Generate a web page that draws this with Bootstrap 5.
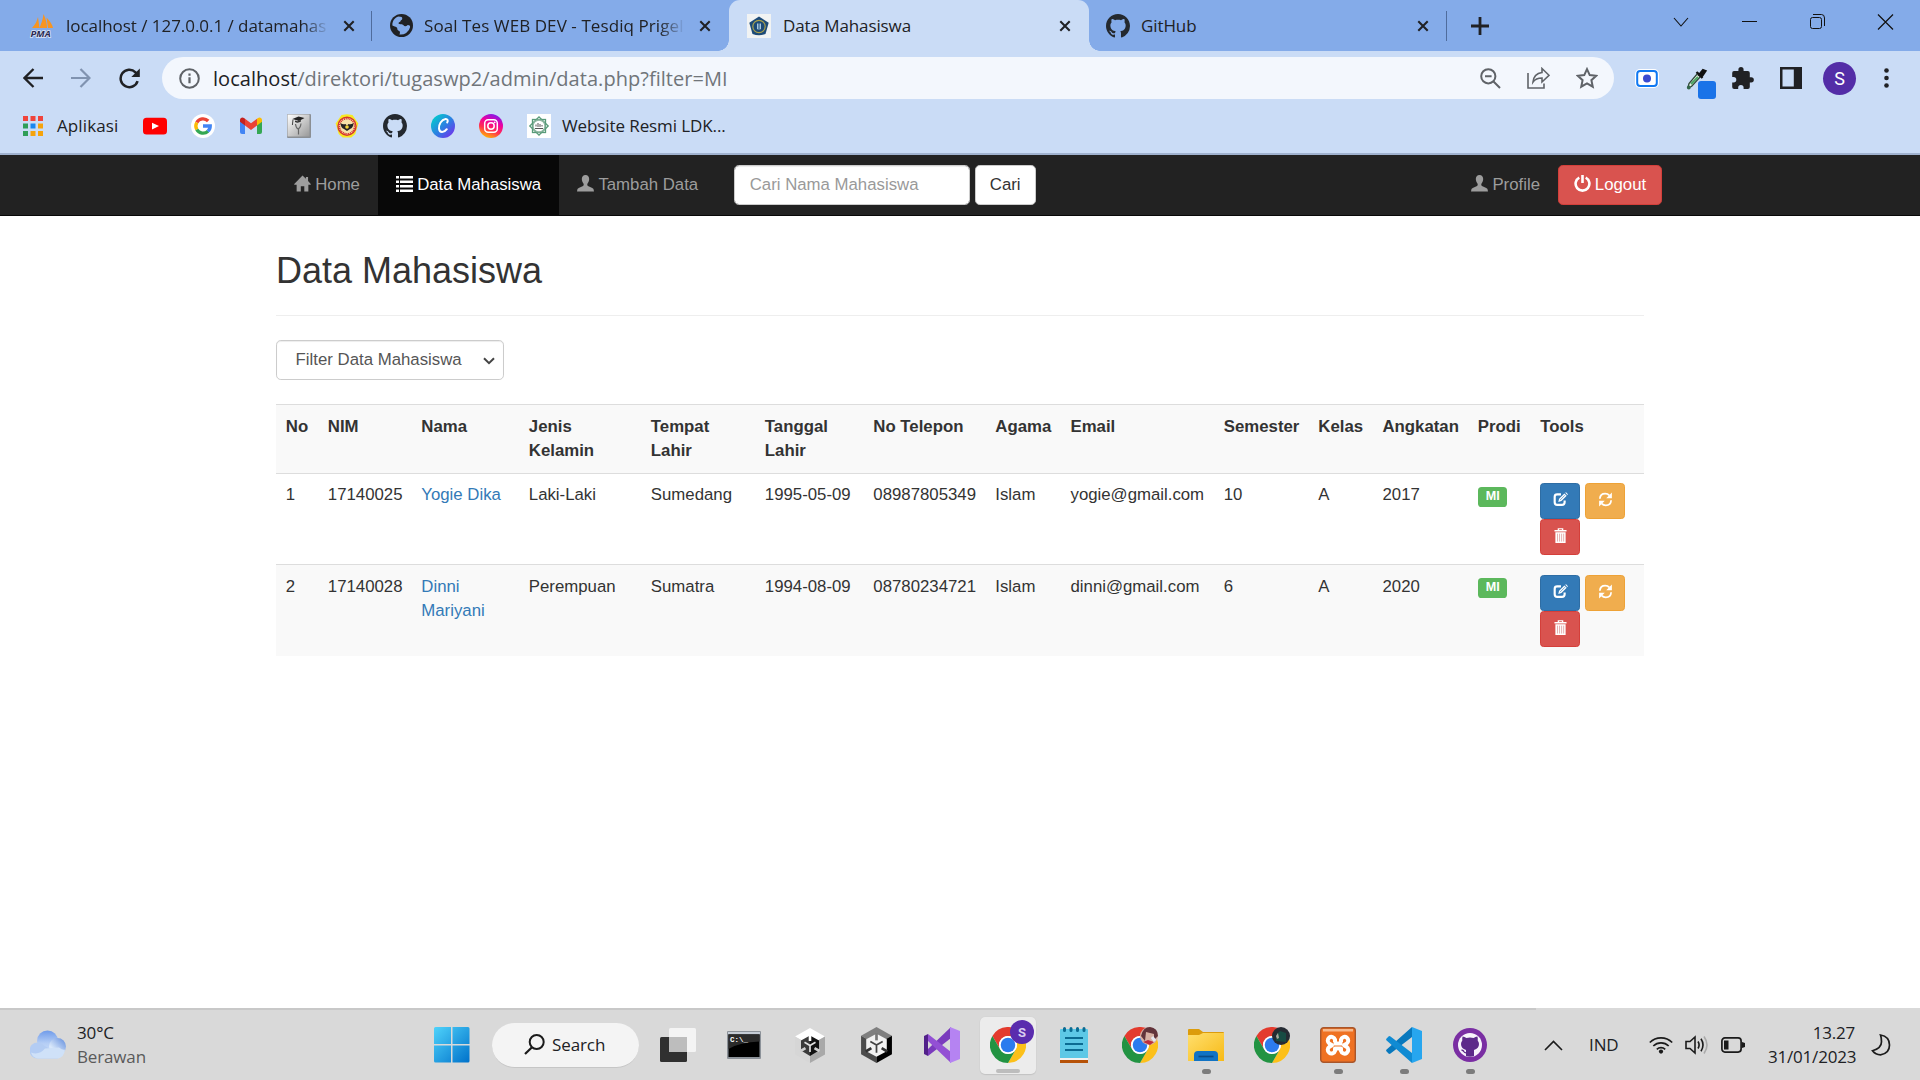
<!DOCTYPE html>
<html lang="id">
<head>
<meta charset="utf-8">
<title>Data Mahasiswa</title>
<meta name="viewport" content="width=device-width, initial-scale=1">
<link href="https://cdn.jsdelivr.net/npm/bootstrap@5.3.0/dist/css/bootstrap.min.css" rel="stylesheet">
<style>
html,body{height:100%;overflow:hidden}
body{font-family:"Liberation Sans",Arial,sans-serif;font-size:16.8px;line-height:24px;color:#333;background:#fff}
svg{display:block;flex:none}
.ui-font{font-family:"Open Sans","Noto Sans",sans-serif;color:#202124;font-size:17px;line-height:24px;letter-spacing:-.1px;white-space:nowrap}
.tabstrip{height:51px;background:#84abe9}
.tab{height:51px}
.tab-text{height:24px}
.tab-fade{-webkit-mask-image:linear-gradient(90deg,#000 90%,transparent);mask-image:linear-gradient(90deg,#000 90%,transparent)}
.tab-1{width:371px;padding-left:30px}
.tab-1 .tab-text{width:263px;margin-left:12px;letter-spacing:-.04px}
.tab-2{width:357px;padding-left:18px}
.tab-2 .tab-text{width:261px;margin-left:11px;letter-spacing:.08px}
.tab-on{width:360px;padding-left:18px;background:#cadcf6;border-radius:11px 11px 0 0;position:relative}
.tab-on .tab-text{width:262px;margin-left:12px}
.tab-on::before,.tab-on::after{content:"";position:absolute;bottom:0;width:11px;height:11px}
.tab-on::before{left:-11px;background:radial-gradient(circle at 0 0,transparent 10.5px,#cadcf6 11px)}
.tab-on::after{right:-11px;background:radial-gradient(circle at 100% 0,transparent 10.5px,#cadcf6 11px)}
.tab-4{width:357px;padding-left:17px}
.tab-4 .tab-text{width:262px;margin-left:11px}
.tab-x{margin-left:14px}
.tab-sep{width:1px;height:30px;background:#4f6c9d}
.tab-new{margin-left:24px}
.win-ctl{gap:51px;padding-right:26px;height:44px}
.toolbar{height:54px;background:#cadcf6;padding-left:23px}
.nav-arrows{gap:28px}
.omnibox{height:42px;width:1452px;background:#f3f7fd;border-radius:21px;margin-left:22px;padding:0 16px 0 17px}
.omni-actions{gap:26px}
.url{font-size:20px;line-height:28px;color:#70757a;margin-left:13px;padding-top:1px;letter-spacing:.04px}
.url span{color:#202124}
.ext-cam{margin-left:21px}
.ext-drop{margin:10px 16px 0 27px}
.ext-panel{margin:0 21px 0 26px}
.avatar{width:33px;height:33px;background:#532da7;color:#fff;font:18px/33px Roboto,sans-serif;margin-right:28px}
.bookmarks{height:50px;background:#cadcf6;border-bottom:2px solid #a0b2cf;padding-left:23px;padding-bottom:7px}
.apps-label{margin-left:14px;width:61px;letter-spacing:.1px}
.bookmarks .links{gap:24px;margin-left:25px}
.last-label{margin-left:11px}
.site-nav{height:61px;background:#222;border-bottom:1px solid #080808}
.page-box{width:1368px;margin:0 auto}
.site-nav a.menu-item{height:60px;padding:0 18px;color:#9d9d9d;text-decoration:none;white-space:nowrap}
.site-nav a.menu-item svg{margin-right:4.2px}
.site-nav a.menu-item.active{background:#080808;color:#fff}
.menu-item svg,.btn-logout svg{margin-top:-3px}
.site-nav .form-control{width:236px;height:40px;margin-left:17.5px;padding:0 15px;font-size:16.8px;border:1px solid #ccc;border-radius:4.8px;box-shadow:inset 0 1px 1px rgba(0,0,0,.075)}
.site-nav .form-control::placeholder{color:#999}
.btn-cari{width:61px;height:40px;margin-left:5px;padding:0;background:#fff;border:1px solid #ccc;color:#333;font-size:16.8px;border-radius:4.8px}
.btn-logout{width:104px;height:40px;padding:0;background:#d9534f;border:1px solid #d43f3a;color:#fff;font-size:16.8px;border-radius:4.8px;margin-right:-18px;white-space:nowrap}
.page-title{font-size:36px;line-height:40px;font-weight:500;color:#333;margin:0;padding-top:35px}
.title-rule{margin:24px 0 24px;border:0;border-top:1px solid #eee;opacity:1}
.filter{width:228px;height:40px;border:1px solid #ccc;border-radius:4.8px;padding:0 0 0 18.6px;color:#555;font-size:16.8px;line-height:24px;box-shadow:inset 0 1px 1px rgba(0,0,0,.075);background:#fff}
.filter svg{margin-right:8px;margin-top:1px}
.student-table{width:1368px;table-layout:fixed;margin:24px 0 0;color:#333;border-collapse:collapse}
.student-table tr{height:91px}
.student-table thead tr{height:69px}
.student-table>:not(caption)>*>*{padding:9.6px 9px 8px 9.8px;border:0;border-top:1px solid #ddd;vertical-align:top;box-shadow:none;background:transparent;color:#333;line-height:24px}
.student-table>tbody>tr:first-child>td{padding-top:8.6px}
.student-table tr.shade{background:#f9f9f9}
.student-table a.person{color:#337ab7;text-decoration:none}
.student-table .prodi{width:29px;height:20px;margin:3.4px 0 0 .6px;background:#5cb85c;color:#fff;font-weight:700;font-size:12.6px;line-height:18px;border-radius:3.6px;padding:0;display:block}
.student-table tr:first-child .prodi{margin-top:4.4px}
.tools{width:90px;column-gap:5px}
.tools .btn{width:40px;height:36px;padding:0 0 2px;border-radius:3.6px}
.btn-ubah{background:#337ab7;border:1px solid #2e6da4}
.btn-ulang{background:#f0ad4e;border:1px solid #eea236}
.btn-hapus{background:#d9534f;border:1px solid #d43f3a}
.taskbar{height:72px;background:#d9d9d9;color:#1b1b1b}
.taskbar-edge{height:2px;width:1536px;background:#c8c8c8}
.taskbar-body{height:70px}
.weather{width:434px;padding-left:30px}
.weather svg{margin-top:-2px}
.weather .words{margin-left:11px;line-height:24px;letter-spacing:-.15px}
.weather .sub{color:#5a5a5a}
.start{width:36px;margin-right:22px}
.search-pill{width:147px;height:45px;background:#f4f4f4;border-radius:23px;border-bottom:1px solid #c6c6c6;padding-left:32px;margin-right:6px}
.search-pill span{margin-left:7px;padding-top:1px}
.app{width:66px;height:70px;position:relative}
.app.running::after{content:"";position:absolute;left:28.5px;top:59px;width:9px;height:5px;border-radius:3px;background:#7c7c7c}
.app.front svg{position:relative}
.app.front::before{content:"";position:absolute;left:5px;top:7px;width:56px;height:57px;border-radius:5px;background:#ececec;box-shadow:0 1px 1px #c3c3c3,0 0 1px #c3c3c3}
.app.front::after{content:"";position:absolute;left:21px;top:59px;width:24px;height:4px;border-radius:3px;background:#bdbdbd}
.tray{padding-right:29px}
.tray-icons{gap:12px;margin-left:29px}
.lang{margin-left:26px;width:31px}
.clock{text-align:right;line-height:24px;margin-left:23px;margin-right:16px;width:87px;letter-spacing:-.2px;margin-top:-1px}
</style>
<script src="https://cdn.jsdelivr.net/npm/bootstrap@5.3.0/dist/js/bootstrap.bundle.min.js"></script>
</head>
<body class="d-flex flex-column">
<svg width="0" height="0" class="position-absolute" aria-hidden="true">
<defs>
<symbol id="i-x" viewBox="0 0 14 14"><path d="M1.500 1.500l11 11M12.500 1.500l-11 11" stroke="#202124" stroke-width="2.400"/></symbol>
<symbol id="i-github" viewBox="0 0 16 16"><path fill-rule="evenodd" d="M8 0C3.58 0 0 3.58 0 8c0 3.54 2.29 6.53 5.47 7.59.4.07.55-.17.55-.38 0-.19-.01-.82-.01-1.49-2.01.37-2.53-.49-2.69-.94-.09-.23-.48-.94-.82-1.13-.28-.15-.68-.52-.01-.53.63-.01 1.08.58 1.23.82.72 1.21 1.87.87 2.33.66.07-.52.28-.87.51-1.07-1.78-.2-3.64-.89-3.64-3.95 0-.87.31-1.59.82-2.15-.08-.2-.36-1.02.08-2.12 0 0 .67-.21 2.2.82.64-.18 1.32-.27 2-.27s1.36.09 2 .27c1.53-1.04 2.2-.82 2.2-.82.44 1.1.16 1.92.08 2.12.51.56.82 1.27.82 2.15 0 3.07-1.87 3.75-3.65 3.95.29.25.54.73.54 1.48 0 1.07-.01 1.93-.01 2.2 0 .21.15.46.55.38A8.01 8.01 0 0 0 16 8c0-4.42-3.58-8-8-8z"/></symbol>
<symbol id="i-user" viewBox="0 0 18 18"><path d="M9 0c2.600 0 3.900 1.800 3.900 4.300 0 2-.8 3.600-1.700 4.800-.5.700-.4 2 .4 2.500l4.600 2.200c1 .5 1.300 1.100 1.500 2.100l.3 1.600H0l.3-1.600c.2-1 .5-1.600 1.500-2.100l4.600-2.200c.8-.5.900-1.800.4-2.500C5.900 7.900 5.100 6.300 5.100 4.300 5.100 1.800 6.400 0 9 0z" fill="currentColor"/></symbol>
<symbol id="i-chrome" viewBox="0 0 48 48"><path d="M3.200 12A24 24 0 0 1 44.800 12H24A12 12 0 0 0 13.600 30z" fill="#e33b2e"/><path d="M44.800 12A24 24 0 0 1 24 48L34.400 30A12 12 0 0 0 24 12z" fill="#fcc01a"/><path d="M24 48A24 24 0 0 1 3.200 12L13.600 30A12 12 0 0 0 34.400 30z" fill="#229342"/><circle cx="24" cy="24" r="12" fill="#fff"/><circle cx="24" cy="24" r="9.700" fill="#2c7bee"/></symbol>
<symbol id="i-edit" viewBox="0 0 16 16"><path d="M8.500 2.500H4.500Q1.800 2.500 1.800 5V11Q1.800 13.800 4.500 13.800H9.500Q12.400 13.800 12.400 11V9" fill="none" stroke="#fff" stroke-width="2.300"/><path d="M5.600 10.700l.9-3.600 5.600-5.500 2.500 2.500-5.600 5.600z" fill="#fff"/><path d="M13 .9l.9-.6 2 2-.6.9z" fill="#fff"/><path d="M7.500 8.600l5.200-5.200" stroke="#337ab7" stroke-width=".7"/></symbol>
<symbol id="i-refresh" viewBox="0 0 16 16"><path d="M2 7.200C2.200 3.800 4.600 1.700 7.700 1.700c1.900 0 3.300.7 4.300 1.900M14 8.800c-.2 3.400-2.600 5.500-5.700 5.500-1.900 0-3.300-.7-4.300-1.900" fill="none" stroke="#fff" stroke-width="1.900"/><path d="M14.800.6V6.600H8.800zM1.200 15.400V9.400h6z" fill="#fff"/></symbol>
<symbol id="i-trash" viewBox="0 0 14 16"><path d="M4 2V.2h6V2h3.500v1.600H.5V2zM5.500 2h3v-.6h-3zM1.500 4.600h11V16h-11z" fill="#fff" fill-rule="evenodd"/><path d="M3.800 6v8.500M6 6v8.500M8.200 6v8.500M10.400 6v8.500" stroke="#dc9494" stroke-width=".8"/></symbol>
<linearGradient id="g-win" x1="0" y1="0" x2="1" y2="1"><stop stop-color="#4fd3fb"/><stop offset="1" stop-color="#0071ca"/></linearGradient>
<linearGradient id="g-cloud" x1="0" y1="0" x2="0" y2="1"><stop stop-color="#6f9bea"/><stop offset=".6" stop-color="#b4cdf5"/><stop offset="1" stop-color="#c7dcf8"/></linearGradient>
<linearGradient id="g-cloud2" x1="1" y1="0" x2="0" y2="1"><stop stop-color="#5f8bdc"/><stop offset=".7" stop-color="#d8e7fa"/></linearGradient>
<linearGradient id="g-canva" x1="0" y1="0" x2="1" y2="1"><stop offset=".15" stop-color="#07c2d0"/><stop offset=".55" stop-color="#2f7be3"/><stop offset="1" stop-color="#8320ee"/></linearGradient>
<linearGradient id="g-insta" x1=".3" y1="1" x2=".7" y2="0"><stop stop-color="#ffb900"/><stop offset=".35" stop-color="#ff3050"/><stop offset=".65" stop-color="#f2009c"/><stop offset="1" stop-color="#7b1df0"/></linearGradient>
<linearGradient id="g-folder" x1="0" y1="0" x2="1" y2="1"><stop stop-color="#ffdf6e"/><stop offset="1" stop-color="#f7ba16"/></linearGradient>
<linearGradient id="g-grey" x1="0" y1="0" x2="1" y2="1"><stop stop-color="#fff"/><stop offset="1" stop-color="#999"/></linearGradient>
</defs>
</svg>

<!-- tab strip -->
<header class="tabstrip d-flex align-items-center ui-font">
  <div class="tab tab-1 d-flex align-items-center">
    <svg width="24" height="24" viewBox="0 0 24 24" overflow="visible"><path d="M2 14C5 11 7 7 8 3l1.500 11zM9.500 14C11 10 13 5 13.500 0c2 4 3.500 9 3.500 14zM16.500 3.500C20 7 22.500 11 23 14h-5z" fill="#f79522"/><text x=".5" y="22.800" font-family="Open Sans,sans-serif" font-size="9.500" font-weight="700" font-style="italic" letter-spacing="0" fill="#2b2b54" stroke="#dfe6f5" stroke-width="1.500" paint-order="stroke">PMA</text></svg>
    <div class="tab-text tab-fade">localhost / 127.0.0.1 / datamahas</div>
    <svg class="tab-x" width="12" height="12"><use href="#i-x"/></svg>
  </div>
  <div class="tab-sep"></div>
  <div class="tab tab-2 d-flex align-items-center">
    <svg width="23" height="23" viewBox="0 0 22 22"><circle cx="11" cy="11" r="11" fill="#202124"/><path d="M8 2.500c3 0 4 .8 3.700 2.200-.3 1.200-1.400.9-1.600 2-.2 1.300-1.700.7-2 2 0 1 1.500 1.200 3.200 1.200 1.800.2 1.600 1.800 3.300 1.900 1.600.1 1.500-1.200 2.600-1.200 1.300 0 2.200.7 2 2A9 9 0 0 1 9 19.500c1-1.500.6-3-.5-3.500-1-.5-1.500-.8-1.500-2 0-1.500-1.300-1.500-2.500-2L2.300 11C2 7 4.500 3.500 8 2.500z" fill="#84abe9"/></svg>
    <div class="tab-text tab-fade">Soal Tes WEB DEV - Tesdiq Prigel</div>
    <svg class="tab-x" width="12" height="12"><use href="#i-x"/></svg>
  </div>
  <div class="tab tab-on d-flex align-items-center">
    <svg width="24" height="24" viewBox="0 0 24 24"><path d="M0 0h24v24H0z" fill="#f1f3f3"/><path d="M12 2.500l9.700 6.300L18.500 20q-6.500 2.500-13 0L2.300 8.800z" fill="#1c4a78"/><circle cx="12" cy="12.500" r="6.200" fill="none" stroke="#a9a04c" stroke-width="1.200"/><path d="M10 9.500h4v5.500l-2 1-2-1z" fill="#a7c7dd"/><path d="M12 9v7" stroke="#1c4a78"/></svg>
    <div class="tab-text">Data Mahasiswa</div>
    <svg class="tab-x" width="12" height="12"><use href="#i-x"/></svg>
  </div>
  <div class="tab tab-4 d-flex align-items-center">
    <svg width="24" height="24" fill="#24292f"><use href="#i-github"/></svg>
    <div class="tab-text">GitHub</div>
    <svg class="tab-x" width="12" height="12"><use href="#i-x"/></svg>
  </div>
  <div class="tab-sep"></div>
  <svg class="tab-new" width="18" height="18" viewBox="0 0 18 18"><path d="M9 0v18M0 9h18" stroke="#202124" stroke-width="2.800"/></svg>
  <div class="win-ctl d-flex align-items-center ms-auto align-self-start">
    <svg width="18" height="16" viewBox="0 0 18 16"><path d="M2 4l7 8 7-8" fill="none" stroke="#111" stroke-width="1.100"/></svg>
    <svg width="17" height="16"><path d="M1 7.500h15" stroke="#111"/></svg>
    <svg width="17" height="16" viewBox="0 0 17 16"><rect x="1.500" y="3.500" width="11" height="11" rx="2" fill="none" stroke="#111"/><path d="M4 .5h8.500Q15.500.5 15.500 4v8" fill="none" stroke="#111"/></svg>
    <svg width="17" height="16"><path d="M1 .5l15 15M16 .5L1 15.500" stroke="#111" stroke-width="1.200"/></svg>
  </div>
</header>

<!-- toolbar -->
<div class="toolbar d-flex align-items-center ui-font">
  <div class="nav-arrows d-flex align-items-center">
    <svg width="20" height="20" viewBox="0 0 20 20"><path d="M20 10H2M10.500 1L1.500 10l9 9" fill="none" stroke="#202124" stroke-width="2.300"/></svg>
    <svg width="20" height="20" viewBox="0 0 20 20"><path d="M0 10h18M9.500 1l9 9-9 9" fill="none" stroke="#8093b0" stroke-width="2.200"/></svg>
    <svg width="21" height="21" viewBox="0 0 21 21"><path d="M18.600 13.200A8.700 8.700 0 1 1 16.500 4.300L18 6" fill="none" stroke="#202124" stroke-width="2.500"/><path d="M20.800.5V9h-8.500z" fill="#202124"/></svg>
  </div>
  <div class="omnibox d-flex align-items-center">
    <svg width="21" height="21" viewBox="0 0 21 21"><circle cx="10.500" cy="10.500" r="9.300" fill="none" stroke="#5f6368" stroke-width="2"/><path d="M10.500 9.200v6M10.500 5.500v2.200" stroke="#5f6368" stroke-width="2.200"/></svg>
    <div class="url"><span>localhost</span>/direktori/tugaswp2/admin/data.php?filter=MI</div>
    <div class="omni-actions d-flex align-items-center ms-auto">
      <svg width="21" height="21" viewBox="0 0 21 21"><circle cx="8.300" cy="8.300" r="7.100" fill="none" stroke="#5f6368" stroke-width="2"/><path d="M5 8.300h6.600M13.500 13.500l6.500 6.500" stroke="#5f6368" stroke-width="2"/></svg>
      <svg width="23" height="22" viewBox="0 0 23 22"><path d="M1 6v15h16v-4.500" fill="none" stroke="#5f6368" stroke-width="1.600"/><path d="M15 1.500l7 6.800-7 6.700v-4c-4 0-7 1.200-9 4C6.500 10 9 6.300 15 5.500z" fill="none" stroke="#5f6368" stroke-width="1.600"/></svg>
      <svg width="22" height="22" viewBox="0 0 21 21"><path d="M10.500 2l2.600 5.700 6.200.7-4.600 4.200 1.300 6.200-5.500-3.200-5.500 3.200 1.300-6.200-4.600-4.200 6.200-.7z" fill="none" stroke="#5f6368" stroke-width="1.900"/></svg>
    </div>
  </div>
  <svg class="ext-cam" width="24" height="19" viewBox="0 0 24 19"><rect x="0" y="0" width="24" height="19" rx="5" fill="#fff"/><rect x="2.200" y="2" width="19.600" height="15" rx="3" fill="#fff" stroke="#0f78f2" stroke-width="2"/><circle cx="12" cy="9.500" r="4" fill="#3a4bd0"/></svg>
  <svg class="ext-drop" width="30" height="32" viewBox="0 0 30 32"><path d="M2 20.500l1-4L12 6l3 3L5.500 19.500z" fill="#e7efe4" stroke="#304838" stroke-width="1.300"/><path d="M5 17l7-7" stroke="#48a360" stroke-width="2"/><path d="M10.500 5l6 6M13 8l4-5 2.500 1-4 6z" stroke="#111" stroke-width="2.200" fill="#111"/><circle cx="2.800" cy="20.500" r="1.900" fill="#34664a"/><rect x="12" y="14" width="18" height="18" rx="3" fill="#1a73e8"/></svg>
  <svg width="22" height="22" viewBox="0 0 22 22"><path d="M19.200 10.200h-1.400V6q0-2-2-2h-4.200V2.700a2.600 2.600 0 0 0-5.200 0V4H2Q.2 4 .2 6v4h1.400a2.700 2.700 0 0 1 0 5.400H.2V20q0 2 2 2h4v-1.400a2.700 2.700 0 0 1 5.400 0V22h4.200q2 0 2-2v-4.500h1.400a2.650 2.650 0 0 0 0-5.300z" fill="#202124"/></svg>
  <svg class="ext-panel" width="22" height="22" viewBox="0 0 22 22"><path d="M0 0h22v22H0zM2.500 2.500v17h11.300v-17z" fill="#202124" fill-rule="evenodd"/></svg>
  <div class="avatar rounded-circle text-center">S</div>
  <svg width="5" height="20" viewBox="0 0 5 20"><g fill="#202124"><circle cx="2.500" cy="2.500" r="2.300"/><circle cx="2.500" cy="10" r="2.300"/><circle cx="2.500" cy="17.500" r="2.300"/></g></svg>
</div>

<!-- bookmarks bar -->
<div class="bookmarks d-flex align-items-center ui-font">
  <svg width="20" height="20" viewBox="0 0 20 20"><path d="M0 0h5v5H0zM7.500 0h5v5h-5zM15 0h5v5h-5z" fill="#f0443c"/><path d="M0 7.500h5v5H0zM0 15h5v5H0z" fill="#2f9e58"/><path d="M7.500 7.500h5v5h-5z" fill="#1a86f0"/><path d="M15 7.500h5v5h-5zM7.500 15h5v5h-5zM15 15h5v5h-5z" fill="#f5a30c"/></svg>
  <div class="apps-label">Aplikasi</div>
  <div class="links d-flex align-items-center">
    <svg width="24" height="24" viewBox="0 0 24 24"><rect y="3.700" width="24" height="16.700" rx="3.500" fill="#f00"/><path d="M9 8.700v6.800l7-3.400z" fill="#fff"/></svg>
    <svg width="24" height="24" viewBox="0 0 24 24"><circle cx="12" cy="12" r="12" fill="#fff"/><g fill="none" stroke-width="3.400"><path d="M5.800 8.500A7.200 7.200 0 0 1 17.200 7" stroke="#ea4335"/><path d="M5.800 15.500A7.200 7.200 0 0 1 5.800 8.500" stroke="#fbbc05"/><path d="M17 17.200A7.200 7.200 0 0 1 5.800 15.500" stroke="#34a853"/><path d="M12 12h7.200Q19.200 15.300 16.800 17.300" stroke="#4285f4"/></g></svg>
    <svg width="24" height="24" viewBox="0 0 24 24"><path d="M1 6v12q0 2 2 2h3V9z" fill="#4285f4"/><path d="M18 20h3q2 0 2-2V6l-5 4z" fill="#34a853"/><path d="M18 4.800v6.700l5-3.800V6c0-2-2.300-3.200-4-1.900z" fill="#fbbc04"/><path d="M6 11.500V4.800l6 4.500 6-4.500v6.700L12 16z" fill="#ea4335"/><path d="M1 7.700V6c0-2 2.300-3.200 4-1.900l1 .7v6.700z" fill="#c5221f"/></svg>
    <svg width="24" height="24" viewBox="0 0 24 24"><rect width="24" height="24" rx="1" fill="#8b8f94"/><rect x=".5" y=".5" width="22" height="22" fill="url(#g-grey)"/><path d="M5.500 5l6-2.500 6 1.500-5.500 3z" fill="#222"/><path d="M8 6.500q3 1.500 6-.5v1.500q-3 2-6 .5z" fill="#333"/><path d="M6 5.500l-.6 5.500" stroke="#444" fill="none"/><path d="M8.500 10q.5 4 2.500 5 2.500-1 3-5.500M11.500 15v5.500" fill="none" stroke="#666" stroke-width="1.200"/></svg>
    <svg width="24" height="24" viewBox="0 0 24 24"><path d="M12 .3L17.500 1l5.800 8.500-3 10.500-4 3.500H7.700l-4-3.500-3-10.500L6.500 1z" fill="#f7ea22"/><circle cx="12" cy="12.200" r="9" fill="#fff3d0" stroke="#d5382c" stroke-width="1.400"/><circle cx="12" cy="12.200" r="7.600" fill="#f6e3aa" stroke="#d5382c" stroke-width="1.600" stroke-dasharray="1.200 .7"/><path d="M5.500 9q2.500 2 5 1l1.500 1.500L13.500 10q2.500 1 5-1-.2 5-3.500 6l-3 2-3-2q-3.300-1-3.500-6z" fill="#252525"/><circle cx="12" cy="13" r="1.800" fill="#f2d43a"/></svg>
    <svg width="24" height="24" fill="#24292f"><use href="#i-github"/></svg>
    <svg width="24" height="24" viewBox="0 0 24 24"><circle cx="12" cy="12" r="12" fill="url(#g-canva)"/><path d="M16.200 8.500c1.200-2 .3-3.700-1.700-3.500-4 .5-7 5.500-6.500 9.700.5 4.500 5 4.300 7.800.5" fill="none" stroke="#fff" stroke-width="2" stroke-linecap="round"/></svg>
    <svg width="24" height="24" viewBox="0 0 24 24"><circle cx="12" cy="12" r="12" fill="url(#g-insta)"/><g fill="none" stroke="#fff" stroke-width="1.500"><rect x="5.700" y="5.700" width="12.600" height="12.600" rx="3.500"/><circle cx="12" cy="12" r="3.200"/></g><circle cx="15.700" cy="8.300" r=".9" fill="#fff"/></svg>
    <svg width="24" height="24" viewBox="0 0 24 24"><path d="M0 0h24v24H0z" fill="#fff"/><g fill="none" stroke="#579a78" stroke-width="1.300"><rect x="5.500" y="5.500" width="13" height="13"/><rect x="5.500" y="5.500" width="13" height="13" transform="rotate(45 12 12)"/><circle cx="12" cy="12" r="6" stroke="#8eb6a1"/></g><path d="M8 14.500h8M9 12.500v-2M11 13V9M13 13v-3M15 12.500v-1.500" stroke="#555" stroke-width="1"/></svg>
  </div>
  <div class="last-label">Website Resmi LDK...</div>
</div>

<!-- site navigation -->
<nav class="site-nav">
  <div class="page-box d-flex align-items-center">
    <a href="#" class="menu-item d-flex align-items-center"><svg width="17" height="17" viewBox="0 0 18 17"><path d="M9 0l3.600 3.600V1.500h2.300v4.400L18 9.200l-.6.700h-2.200V17h-4.300v-5.500H7.200V17H2.800V9.900H.6L0 9.200z" fill="currentColor"/></svg>Home</a>
    <a href="#" class="menu-item active d-flex align-items-center"><svg width="17" height="16" viewBox="0 0 17 16"><path d="M0 0h3v2.500H0zM4 0h13v2.500H4zM0 4.500h3V7H0zM4 4.500h13V7H4zM0 9h3v2.500H0zM4 9h13v2.500H4zM0 13.500h3V16H0zM4 13.500h13V16H4z" fill="#fff"/></svg>Data Mahasiswa</a>
    <a href="#" class="menu-item d-flex align-items-center"><svg width="17" height="17"><use href="#i-user"/></svg>Tambah Data</a>
    <input class="form-control" type="text" placeholder="Cari Nama Mahasiswa">
    <button class="btn btn-cari" type="button">Cari</button>
    <a href="#" class="menu-item d-flex align-items-center ms-auto"><svg width="17" height="17"><use href="#i-user"/></svg>Profile</a>
    <button class="btn btn-logout d-flex align-items-center justify-content-center" type="button"><svg class="me-1" width="17" height="17" viewBox="0 0 17 17"><path d="M5.300 2.600a6.900 6.900 0 1 0 6.400 0M8.500 0v8" fill="none" stroke="#fff" stroke-width="2.600"/></svg>Logout</button>
  </div>
</nav>

<!-- page -->
<main class="page-box flex-grow-1">
  <h2 class="page-title">Data Mahasiswa</h2>
  <hr class="title-rule">
  <div class="filter d-flex align-items-center justify-content-between"><span>Filter Data Mahasiswa</span><svg width="12" height="8" viewBox="0 0 12 8"><path d="M1 1.200l5 5 5-5" fill="none" stroke="#444" stroke-width="2"/></svg></div>
  <table class="table student-table">
    <colgroup><col style="width:42px"><col style="width:93.500px"><col style="width:107.500px"><col style="width:122px"><col style="width:114px"><col style="width:108.500px"><col style="width:122px"><col style="width:75.200px"><col style="width:153.300px"><col style="width:94.500px"><col style="width:64.200px"><col style="width:95.300px"><col style="width:62.500px"><col style="width:113.500px"></colgroup>
    <thead><tr class="shade"><th>No</th><th>NIM</th><th>Nama</th><th>Jenis<br>Kelamin</th><th>Tempat<br>Lahir</th><th>Tanggal<br>Lahir</th><th>No Telepon</th><th>Agama</th><th>Email</th><th>Semester</th><th>Kelas</th><th>Angkatan</th><th>Prodi</th><th>Tools</th></tr></thead>
    <tbody>
      <tr><td>1</td><td>17140025</td><td><a class="person" href="#">Yogie Dika</a></td><td>Laki-Laki</td><td>Sumedang</td><td>1995-05-09</td><td>08987805349</td><td>Islam</td><td>yogie@gmail.com</td><td>10</td><td>A</td><td>2017</td><td><span class="badge prodi">MI</span></td>
        <td><div class="tools d-flex flex-wrap"><a href="#" class="btn btn-ubah d-flex align-items-center justify-content-center"><svg width="15" height="15"><use href="#i-edit"/></svg></a><a href="#" class="btn btn-ulang d-flex align-items-center justify-content-center"><svg width="15" height="15"><use href="#i-refresh"/></svg></a><a href="#" class="btn btn-hapus d-flex align-items-center justify-content-center"><svg width="13" height="15"><use href="#i-trash"/></svg></a></div></td></tr>
      <tr class="shade"><td>2</td><td>17140028</td><td><a class="person" href="#">Dinni<br>Mariyani</a></td><td>Perempuan</td><td>Sumatra</td><td>1994-08-09</td><td>08780234721</td><td>Islam</td><td>dinni@gmail.com</td><td>6</td><td>A</td><td>2020</td><td><span class="badge prodi">MI</span></td>
        <td><div class="tools d-flex flex-wrap"><a href="#" class="btn btn-ubah d-flex align-items-center justify-content-center"><svg width="15" height="15"><use href="#i-edit"/></svg></a><a href="#" class="btn btn-ulang d-flex align-items-center justify-content-center"><svg width="15" height="15"><use href="#i-refresh"/></svg></a><a href="#" class="btn btn-hapus d-flex align-items-center justify-content-center"><svg width="13" height="15"><use href="#i-trash"/></svg></a></div></td></tr>
    </tbody>
  </table>
</main>

<!-- taskbar -->
<footer class="taskbar">
  <div class="taskbar-edge"></div>
  <div class="taskbar-body d-flex align-items-center ui-font">
    <div class="weather d-flex align-items-center">
      <svg width="36" height="29" viewBox="0 0 36 29"><circle cx="17.500" cy="11" r="10.500" fill="url(#g-cloud)"/><circle cx="27.500" cy="16.500" r="8.500" fill="url(#g-cloud2)"/><path d="M7.500 28.500a7.500 7.500 0 1 1 0-16q4 0 6.500 3l14 8v5z" fill="#b3ccf3"/><path d="M7.500 28.500q-5-1-6.500-6 8 3 14-4l14-1q4 3 6 2-1 8-7 9z" fill="#cfe1f8"/></svg>
      <div class="words">30°C<br><span class="sub">Berawan</span></div>
    </div>
    <svg class="start" width="36" height="36" viewBox="0 0 36 36"><path d="M1.500 0H17v17H0V1.500Q0 0 1.500 0zM18.500 0H34q1.500 0 1.500 1.500V17h-17zM0 18.500h17V35.500H1.500Q0 35.500 0 34zM18.500 18.500h17V34q0 1.500-1.500 1.500H18.500z" fill="url(#g-win)"/></svg>
    <div class="search-pill d-flex align-items-center"><svg width="21" height="21" viewBox="0 0 21 21"><circle cx="12.700" cy="8" r="7" fill="none" stroke="#1b1b1b" stroke-width="2"/><path d="M8 13.200L1 20" stroke="#1b1b1b" stroke-width="2.200"/></svg><span>Search</span></div>
    <div class="app d-flex align-items-center justify-content-center"><svg width="36" height="34" viewBox="0 0 36 34"><rect y="9" width="27" height="25" rx="1.500" fill="#303030"/><rect x="9" y="0" width="27" height="24" rx="1.500" fill="#f4f4f4"/><path d="M9 9h18v15H9z" fill="#bdbdbd"/></svg></div>
    <div class="app d-flex align-items-center justify-content-center"><svg width="34" height="28" viewBox="0 0 34 28"><rect width="34" height="28" rx="1" fill="#8c9299"/><path d="M1 1h32v2H1z" fill="#c5ccd5"/><path d="M1.500 3.500h31V26h-31z" fill="#000"/><path d="M1.500 3.500h31v7Q13 11 1.500 18z" fill="#2b2b2b"/><text x="3" y="10.500" font-family="Liberation Mono,monospace" font-size="7.500" font-weight="700" textLength="18" fill="#fff">C:\_</text></svg></div>
    <div class="app d-flex align-items-center justify-content-center"><svg width="30" height="35" viewBox="0 0 30 35"><path d="M15 0l15 8.500L15 17 0 8.500z" fill="#fff"/><path d="M0 8.500L15 17v18L0 26.500z" fill="#d6d6d6"/><path d="M30 8.500v18L15 35V17z" fill="#a9a9a9"/><path d="M15 7.500l9 5v10l-9 5.500z" fill="#111"/><path d="M15 7.500l-9 5v10l9 5.500z" fill="#3a3a3a"/><path d="M15 7v6" stroke="#fff" stroke-width="2.600"/><path d="M5.500 23l5-2.800M24.500 23l-5-2.800" stroke="#cfcfcf" stroke-width="2.600"/><path d="M9.500 14.200l5.500 3.200 5.500-3.200M15 17.500V24" fill="none" stroke="#e2e2e2" stroke-width="1.700"/></svg></div>
    <div class="app d-flex align-items-center justify-content-center"><svg width="31" height="36" viewBox="0 0 30 35"><path d="M15 0l15 8.500L15 17 0 8.500z" fill="#7f7f7f"/><path d="M0 8.500L15 17v18L0 26.500z" fill="#4c4c4c"/><path d="M30 8.500v18L15 35V17z" fill="#000"/><path d="M15 6.500l10 5.500v11.500l-10 5.500-10-5.500V12z" fill="#f2f2f2"/><path d="M15 6v7" stroke="#777" stroke-width="2.600"/><path d="M4.500 23.800l5.500-3.200M25.500 23.800l-5.500-3.200" stroke="#333" stroke-width="2.600"/><path d="M9 14l6 3.500 6-3.500M15 17.500V25" fill="none" stroke="#444" stroke-width="1.700"/></svg></div>
    <div class="app d-flex align-items-center justify-content-center"><svg width="36" height="36" viewBox="0 0 36 36"><path d="M0 9l4-2v22l-4-2z" fill="#52218a"/><path d="M4 29L27 11V0L4 22z" fill="#7a3bbd"/><path d="M4 7l23 18v11L4 14z" fill="#9350d4"/><path d="M26 0l10 4v28l-10 4z" fill="#b583f2"/></svg></div>
    <div class="app front d-flex align-items-center justify-content-center"><svg width="56" height="50" viewBox="0 0 56 50"><use href="#i-chrome" x="10" y="7" width="36" height="36"/><circle cx="42" cy="12" r="12" fill="#5a2cae"/><text x="42" y="16.500" text-anchor="middle" font-family="Roboto,sans-serif" font-weight="700" font-size="13" fill="#d9cdf0">S</text></svg></div>
    <div class="app d-flex align-items-center justify-content-center"><svg width="28" height="37" viewBox="0 0 28 37"><path d="M0 30h28v6H0z" fill="#b65208"/><path d="M0 30h28v3H0z" fill="#f1f1f1"/><path d="M0 3q0-1 1-1h26q1 0 1 1v28H0z" fill="#5dc8e6"/><path d="M5 11h18M5 17h18M5 23h18" stroke="#0b6b92" stroke-width="2"/><path d="M4.500 1.500v2M11 1.500v2M17.500 1.500v2M24 1.500v2" stroke="#0b6b92" stroke-width="3" stroke-linecap="round"/></svg></div>
    <div class="app d-flex align-items-center justify-content-center"><svg width="36" height="36" viewBox="0 0 36 36"><use href="#i-chrome" width="36" height="36"/><circle cx="27" cy="9" r="9" fill="#d6b0a4"/><path d="M19 9q2-9 9-9 8 1 8 9l-4 4V7l-8-2-1 9z" fill="#61333b"/><path d="M21 15l5-2 6 2-4 3z" fill="#bb2e3f"/><path d="M30 10l3 4" stroke="#e4e7f1" stroke-width="3"/></svg></div>
    <div class="app running d-flex align-items-center justify-content-center"><svg width="36" height="34" viewBox="0 0 36 34"><path d="M0 2q0-1 1-1h10l4 3h20q1 0 1 1v6H0z" fill="#dc9c0c"/><path d="M0 7h11l4-2h21v28H0z" fill="url(#g-folder)"/><path d="M6 33v-6q0-4 4-4h16q4 0 4 4v6z" fill="#1173c4"/><path d="M10.500 28.500h15" stroke="#0a4c88" stroke-width="1.700"/></svg></div>
    <div class="app d-flex align-items-center justify-content-center"><svg width="36" height="36" viewBox="0 0 36 36"><use href="#i-chrome" width="36" height="36"/><circle cx="27" cy="9" r="9" fill="#252b33"/><path d="M22 14V8l4-4 6 2v9z" fill="#174b43"/><path d="M22 9l2-3 1 5-2 1z" fill="#a7a79c"/></svg></div>
    <div class="app running d-flex align-items-center justify-content-center"><svg width="36" height="36" viewBox="0 0 36 36"><rect x=".7" y=".7" width="34.600" height="34.600" rx="3" fill="#ef7122" stroke="#a9562a" stroke-width="1.400"/><path d="M3 2h30v2.500H3z" fill="#f7b98c"/><g fill="none" stroke="#fff" stroke-width="4" stroke-linejoin="round"><path d="M15 15V12.500a3.700 3.700 0 1 0-5.500 4.200l2.500 1.500-2.500 1.500a3.700 3.700 0 1 0 5.500 4.200V21.500h6V24a3.700 3.700 0 1 0 5.500-4.200L24 18.200l2.500-1.500a3.700 3.700 0 1 0-5.500-4.200V15"/><path d="M13.500 16.500h9"/></g></svg></div>
    <div class="app running d-flex align-items-center justify-content-center"><svg width="36" height="36" viewBox="0 0 36 36"><path d="M26 0v10L4.500 26.500q-1 .8-2 0L.6 24.500q-1-1 0-2z" fill="#0878bd"/><path d="M26 36V26L4.500 9.500q-1-.8-2 0L.6 11.500q-1 1 0 2z" fill="#108bd3"/><path d="M26 0l10 4v28l-10 4z" fill="#27a6ef"/></svg></div>
    <div class="app running d-flex align-items-center justify-content-center"><svg width="34" height="34" viewBox="0 0 34 34"><circle cx="17" cy="17" r="17" fill="#7a2ea3"/><circle cx="17" cy="17" r="12" fill="#f7f2fb"/><path d="M13 28v-6q-5-1.500-5-6 0-2 1.300-3.500Q9 10 9.600 8.500q2 0 3.800 1.500 3.600-.8 7.200 0 1.800-1.500 3.800-1.500.6 1.500.3 4Q26 14 26 16q0 4.500-5 6v6q-4 1.500-8 0z" fill="#5d2a8a"/><path d="M8.500 22q2 .2 2.500 1.800.5 1 2 1" fill="none" stroke="#5d2a8a" stroke-width="1.300"/></svg></div>
    <div class="tray d-flex align-items-center ms-auto">
      <svg width="19" height="11" viewBox="0 0 19 11"><path d="M1 10l8.500-8.500L18 10" fill="none" stroke="#1b1b1b" stroke-width="1.600"/></svg>
      <div class="lang">IND</div>
      <div class="tray-icons d-flex align-items-center">
        <svg width="24" height="18" viewBox="0 0 24 18"><g fill="none" stroke="#1b1b1b" stroke-width="1.700"><path d="M.8 6.500a16 16 0 0 1 22.400 0M4.300 10a11 11 0 0 1 15.400 0M7.800 13.300a6.200 6.200 0 0 1 8.400 0"/></g><circle cx="12" cy="15.600" r="2.100" fill="#1b1b1b"/></svg>
        <svg width="24" height="20" viewBox="0 0 24 20"><g fill="none" stroke="#1b1b1b" stroke-width="1.600"><path d="M1 6.500h4L10 2v16l-5-4.500H1z"/><path d="M13 6.500q2.200 3.500 0 7M16 3.800q4 6.200 0 12.400"/><path d="M19 1.500q6 8.500 0 17" stroke="#aaa"/></g></svg>
        <svg width="24" height="16" viewBox="0 0 24 16"><rect x=".9" y=".9" width="19.200" height="14.200" rx="3" fill="none" stroke="#1b1b1b" stroke-width="1.700"/><path d="M3 3.500h4.500v9H3zM21 5l3 1v4l-3 1z" fill="#1b1b1b"/></svg>
      </div>
      <div class="clock">13.27<br>31/01/2023</div>
      <svg width="20" height="22" viewBox="0 0 20 22"><path d="M9.500 1q9 1.500 9 10 0 8.500-9 9.800-5 0-8-4 9-2.500 9-9 0-4-1-6.800z" fill="none" stroke="#1b1b1b" stroke-width="1.700"/></svg>
    </div>
  </div>
</footer>
</body>
</html>
